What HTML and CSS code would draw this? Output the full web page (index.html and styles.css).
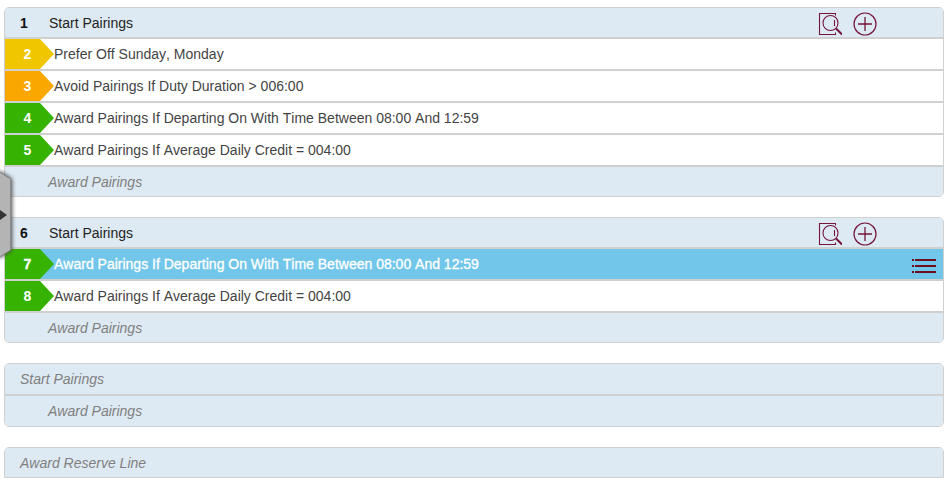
FILE: index.html
```html
<!DOCTYPE html>
<html lang="en">

<head>
    <title>Pairings</title>
    <meta charset="UTF-8">
    <link rel="stylesheet" href="styles.css">
</head>

<body>
<!-- shared icons -->
<svg class="icon-defs" aria-hidden="true">
    <symbol id="icon-search" viewBox="0 0 24 24">
        <path d="M17.5 3.5V1.5H1.5V22.5H17.5V20.5M16.5 8V14" fill="none" stroke="currentColor" stroke-width="1.1"/>
        <circle cx="12.5" cy="11" r="7.5" fill="none" stroke="currentColor" stroke-width="1.1"/>
        <path d="M18 16.5L24 22.5" fill="none" stroke="currentColor" stroke-width="2"/>
    </symbol>
    <symbol id="icon-add" viewBox="0 0 24 24">
        <circle cx="12" cy="12" r="11" fill="none" stroke="currentColor" stroke-width="1.2"/>
        <path d="M12 5V19M5 12H19" fill="none" stroke="currentColor" stroke-width="1.3"/>
    </symbol>
    <symbol id="icon-list" viewBox="0 0 24 16">
        <path d="M0 2H2M3 2H24M0 8H2M3 8H24M0 14H2M3 14H24" fill="none" stroke="currentColor" stroke-width="2"/>
    </symbol>
</svg>

<!-- drawer handle -->
<button type="button" class="drawer-handle" aria-label="Open panel">
    <svg width="18" height="96" viewBox="0 0 18 96">
        <path class="handle-body" d="M-2 3L10.500 11V82L-2 90Z"/>
        <path class="handle-arrow" d="M0 42L7 47L0 52Z"/>
    </svg>
</button>

<main class="bid-list">
    <section class="group">
        <div class="row row-start">
            <span class="number">1</span>
            <span class="label">Start Pairings</span>
            <div class="actions">
                <button type="button" aria-label="Preview"><svg class="icon"><use href="#icon-search"/></svg></button>
                <button type="button" aria-label="Add"><svg class="icon"><use href="#icon-add"/></svg></button>
            </div>
        </div>
        <div class="row">
            <span class="tag tag-prefer">2</span>
            <span class="label">Prefer Off Sunday, Monday</span>
        </div>
        <div class="row">
            <span class="tag tag-avoid">3</span>
            <span class="label">Avoid Pairings If Duty Duration &gt; 006:00</span>
        </div>
        <div class="row">
            <span class="tag tag-award">4</span>
            <span class="label">Award Pairings If Departing On With Time Between 08:00 And 12:59</span>
        </div>
        <div class="row">
            <span class="tag tag-award">5</span>
            <span class="label">Award Pairings If Average Daily Credit = 004:00</span>
        </div>
        <div class="row row-end">Award Pairings</div>
    </section>

    <section class="group">
        <div class="row row-start">
            <span class="number">6</span>
            <span class="label">Start Pairings</span>
            <div class="actions">
                <button type="button" aria-label="Preview"><svg class="icon"><use href="#icon-search"/></svg></button>
                <button type="button" aria-label="Add"><svg class="icon"><use href="#icon-add"/></svg></button>
            </div>
        </div>
        <div class="row row-selected">
            <span class="tag tag-award">7</span>
            <span class="label">Award Pairings If Departing On With Time Between 08:00 And 12:59</span>
            <button type="button" class="menu-button" aria-label="Menu"><svg class="icon-menu"><use href="#icon-list"/></svg></button>
        </div>
        <div class="row">
            <span class="tag tag-award">8</span>
            <span class="label">Award Pairings If Average Daily Credit = 004:00</span>
        </div>
        <div class="row row-end">Award Pairings</div>
    </section>

    <section class="group group-empty">
        <div class="row row-placeholder">Start Pairings</div>
        <div class="row row-end">Award Pairings</div>
    </section>

    <section class="group group-open">
        <div class="row row-placeholder">Award Reserve Line</div>
    </section>
</main>
</body>

</html>
```

FILE: styles.css
```css
body {
    margin: 0;
    background-color: #ffffff;
    color: #444444;
    font-family: "Liberation Sans", Arial, sans-serif;
    font-size: 14px;
    font-kerning: none;
}

button {
    padding: 0;
    border: none;
    background: none;
    color: #74153a;
    cursor: pointer;
}

svg {
    display: block;
}

.icon-defs {
    display: none;
}

/* groups */
.bid-list {
    display: flex;
    flex-direction: column;
    gap: 20px;
    padding: 7px 6px 5px 4px;
}

.group {
    border: 1px solid #d0d0d0;
    border-radius: 5px;
    overflow: hidden;
}

.group-open {
    border-radius: 5px 5px 0 0;
}

/* rows */
.row {
    display: flex;
    align-items: center;
    height: 30px;
}

.row + .row {
    border-top: 2px solid #d0d0d0;
}

.row-start,
.row-end,
.row-placeholder {
    height: 29px;
    background-color: #deeaf3;
}

.group-empty .row {
    height: 30px;
}

.row-start {
    color: #222222;
}

.row-end,
.row-placeholder {
    color: #7f7f7f;
    font-style: italic;
}

.row-end {
    padding-left: 43px;
}

.row-placeholder {
    padding-left: 15px;
}

.row-selected {
    background-color: #72c6ea;
    color: #ffffff;
    -webkit-text-stroke: 0.3px #ffffff;
}

.label {
    flex: 1;
}

.number {
    width: 29px;
    padding-left: 15px;
    color: #111111;
    font-weight: bold;
}

/* arrow tags */
.tag {
    box-sizing: border-box;
    width: 49px;
    height: 30px;
    padding-right: 4px;
    color: #ffffff;
    font-weight: bold;
    line-height: 30px;
    text-align: center;
    clip-path: polygon(0 0, 35px 0, 100% 50%, 35px 100%, 0 100%);
}

.tag-prefer {
    background-color: #efc600;
}

.tag-avoid {
    background-color: #faa700;
}

.tag-award {
    background-color: #36b300;
}

/* icons */
.actions {
    display: flex;
    gap: 11px;
    padding: 2px 66px 0 0;
}

.icon {
    width: 24px;
    height: 24px;
}

.menu-button {
    padding: 4px 7px 0 0;
    color: #6b0f1f;
}

.icon-menu {
    width: 24px;
    height: 16px;
}

/* drawer handle */
.drawer-handle {
    position: absolute;
    z-index: 1;
    top: 168px;
    left: 0;
}

.handle-body {
    fill: #b4b4b4;
    stroke: #8a8a8a;
    filter: drop-shadow(1px 0 2px #444444);
}

.handle-arrow {
    fill: #333333;
}
```
